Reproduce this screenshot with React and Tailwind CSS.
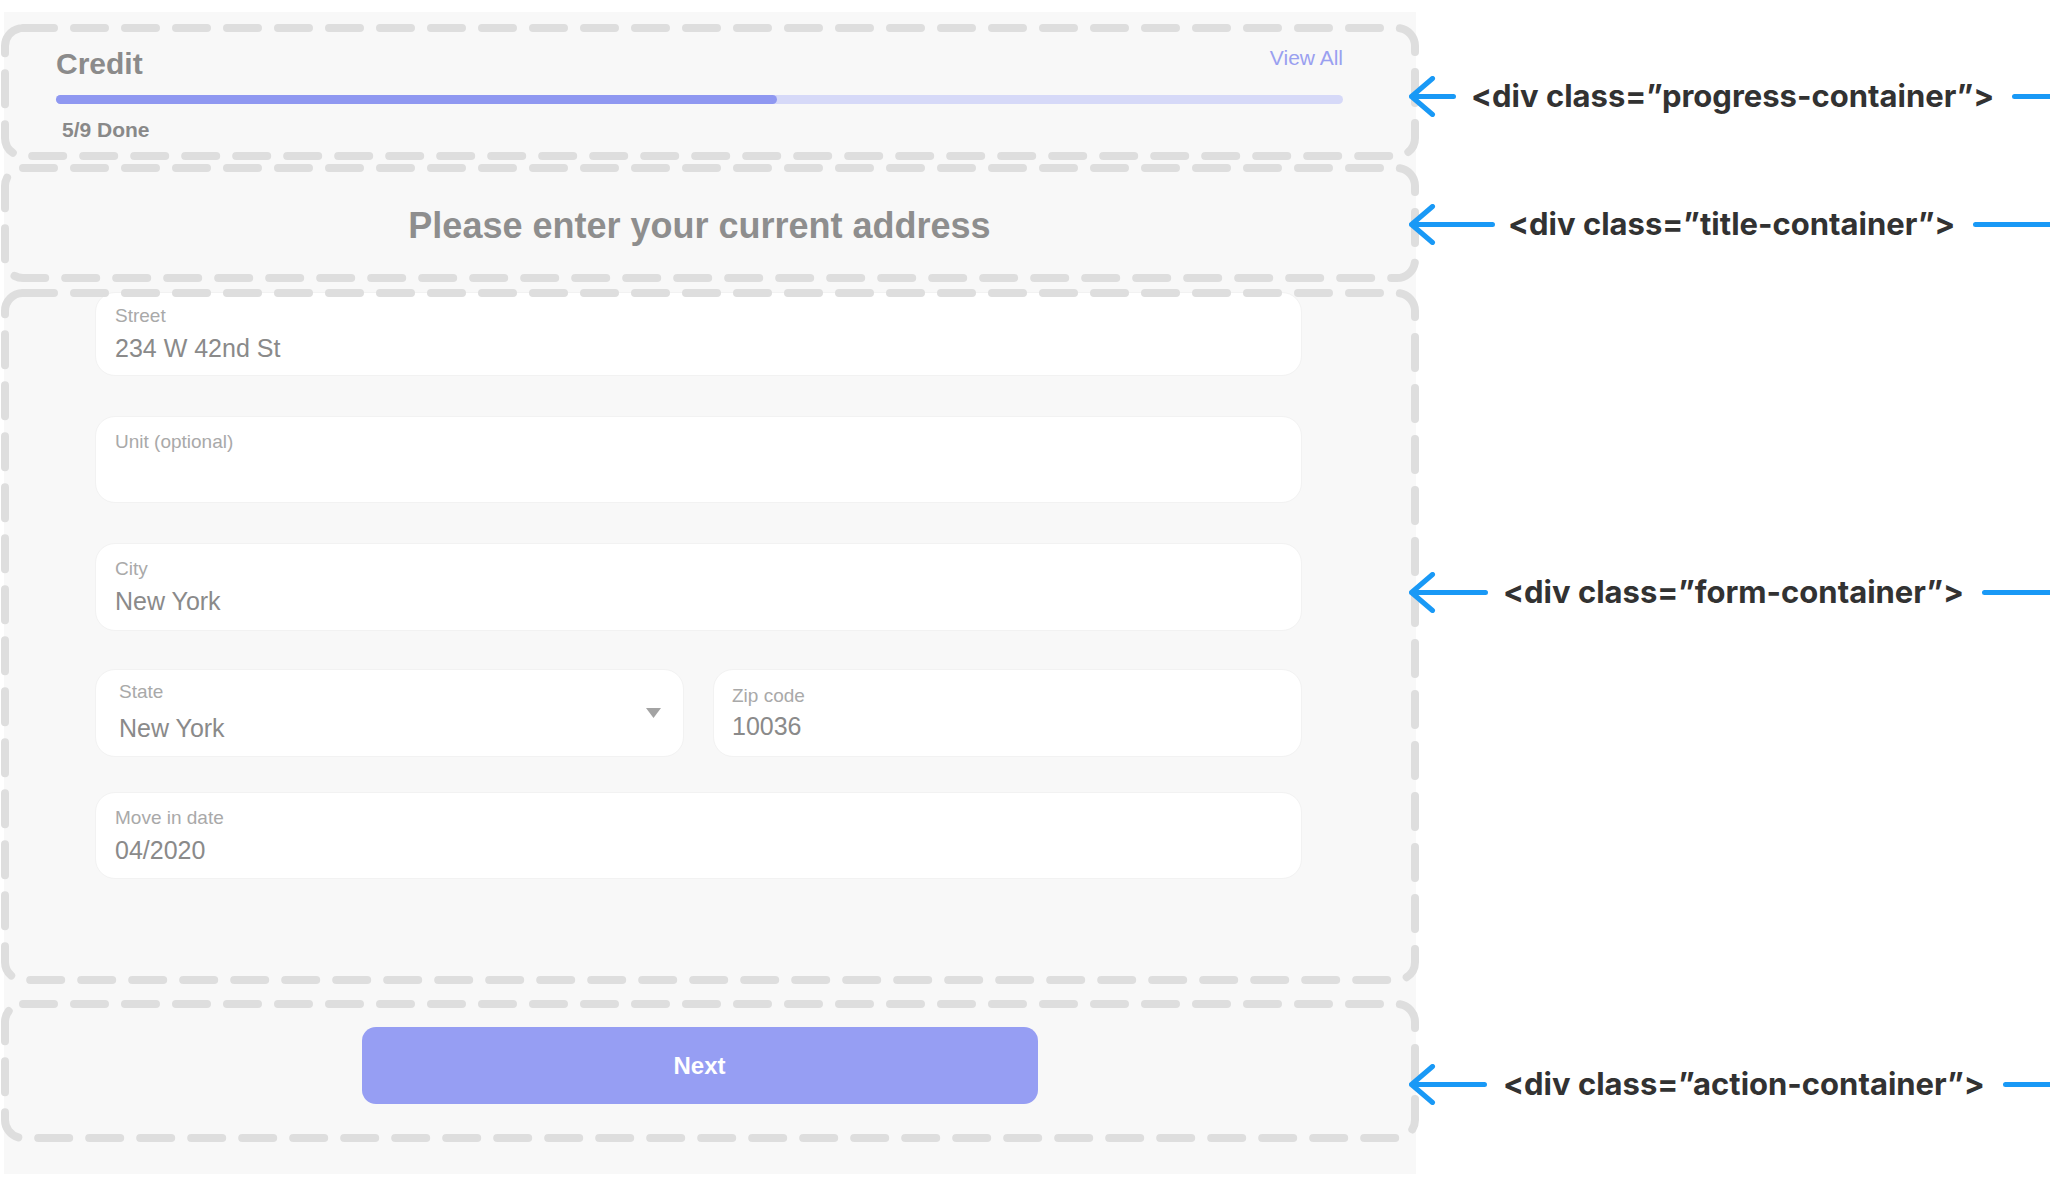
import React from "react";

// dashed outline drawn over a container
function DashedBox({ className, children }) {
  return (
    <div className={`relative -mx-[3px] ${className}`}>
      {children}
      <svg className="pointer-events-none absolute inset-0 h-full w-full overflow-visible">
        <rect
          x="4"
          y="4"
          rx="18"
          className="h-[calc(100%-8px)] w-[calc(100%-8px)]"
          fill="none"
          stroke="#dedede"
          strokeWidth="8"
          strokeDasharray="31 20"
          strokeLinecap="round"
        />
      </svg>
    </div>
  );
}

function Field({ label, value, className = "", pad = "pt-[15px]", gap = "mt-[11px]", px = "pl-[19px]", caret }) {
  return (
    <div
      className={`flex items-center rounded-[20px] border border-[#f2f2f2] bg-white pr-[22px] ${className}`}
    >
      <div className={`flex-1 self-stretch ${pad} ${px}`}>
        <div className="text-[19px] leading-[19px] text-[#a9a9a9]">{label}</div>
        {value && (
          <div className={`${gap} text-[25px] leading-[25px] text-[#8a8a8a]`}>{value}</div>
        )}
      </div>
      {caret && (
        <svg width="15" height="10" viewBox="0 0 15 10">
          <path d="M0 0H15L7.5 10Z" fill="#a3a3a3" />
        </svg>
      )}
    </div>
  );
}

function Callout({ text, arrow, className, textGap, lineGap = "ml-[18px]" }) {
  const w = arrow;
  return (
    <div className={`flex h-[41px] items-center ${className}`}>
      <svg width={w} height="41" viewBox={`0 0 ${w} 41`} className="shrink-0">
        <path
          d={`M2.5 20.5H${w - 2.5}M23.5 2.5L2.5 20.5L23.5 38.5`}
          fill="none"
          stroke="#1999f6"
          strokeWidth="5"
          strokeLinecap="round"
          strokeLinejoin="round"
        />
      </svg>
      <span
        className={`${textGap} whitespace-nowrap font-['Inter',sans-serif] text-[31px] font-bold text-[#323232]`}
      >
        {text}
      </span>
      <div className={`${lineGap} h-[5px] flex-1 rounded-l-full bg-[#1999f6]`} />
    </div>
  );
}

export default function App() {
  return (
    <div className="flex min-h-[1184px] w-[2050px] overflow-hidden bg-white font-['Liberation_Sans',Arial,sans-serif]">
      {/* LEFT: mock UI */}
      <div className="w-[1420px] shrink-0 pt-[12px]">
        <div className="ml-[4px] w-[1412px] bg-[#f8f8f8] pb-[32px] pt-[12px]">
          {/* PROGRESS */}
          <DashedBox className="h-[136px] pl-[55px] pr-[76px] pt-[25px]">
            <div className="flex items-start justify-between">
              <div className="text-[30px] font-bold leading-[30px] text-[#8b8b8b]">Credit</div>
              <div className="-mt-[2px] text-[21px] leading-[21px] text-[#9aa0f0]">View All</div>
            </div>
            <div className="mt-[16px] h-[9px] w-full rounded-full bg-[#d6d9f8]">
              <div className="h-full w-[56%] rounded-full bg-[#8f98f1]" />
            </div>
            <div className="ml-[6px] mt-[15px] text-[21px] font-bold leading-[22px] text-[#898989]">
              5/9 Done
            </div>
          </DashedBox>

          {/* TITLE */}
          <DashedBox className="mt-[4px] flex h-[118px] items-center justify-center pl-[55px] pr-[76px] pt-[5px]">
            <h1 className="text-[36px] font-bold text-[#8e8e8e]">Please enter your current address</h1>
          </DashedBox>

          {/* FORM */}
          <DashedBox className="mt-[7px] h-[695px] pl-[94px] pr-[117px] pt-[3px]">
            <Field label="Street" value="234 W 42nd St" className="h-[84px]" pad="pt-[13px]" />
            <Field label="Unit (optional)" className="mt-[40px] h-[87px]" />
            <Field label="City" value="New York" className="mt-[40px] h-[88px]" />
            <div className="mt-[38px] flex gap-[29px]">
              <Field
                label="State"
                value="New York"
                className="h-[88px] flex-1"
                pad="pt-[12px]"
                gap="mt-[15px]"
                px="pl-[23px]"
                caret
              />
              <Field label="Zip code" value="10036" className="h-[88px] flex-1" pad="pt-[16px]" gap="mt-[9px]" px="pl-[18px]" />
            </div>
            <Field label="Move in date" value="04/2020" className="mt-[35px] h-[87px]" />
          </DashedBox>

          {/* ACTION */}
          <DashedBox className="mt-[16px] flex h-[142px] justify-center pl-[55px] pr-[76px] pt-[27px]">
            <button className="h-[77px] w-[676px] rounded-[14px] bg-[#969ef3] text-[24px] font-bold text-white">
              Next
            </button>
          </DashedBox>
        </div>
      </div>

      {/* RIGHT: callouts */}
      <div className="relative z-10 -ml-[11px] flex flex-1 flex-col">
        <Callout className="mt-[76px]" arrow={47} textGap="ml-[15px]" text="<div class=”progress-container”>" />
        <Callout className="mt-[87px]" arrow={86} textGap="ml-[13px]" text="<div class=”title-container”>" />
        <Callout className="mt-[327px]" arrow={79} textGap="ml-[15px]" text="<div class=”form-container”>" />
        <Callout className="mt-[451px]" arrow={78} textGap="ml-[16px]" text="<div class=”action-container”>" />
      </div>
    </div>
  );
}
